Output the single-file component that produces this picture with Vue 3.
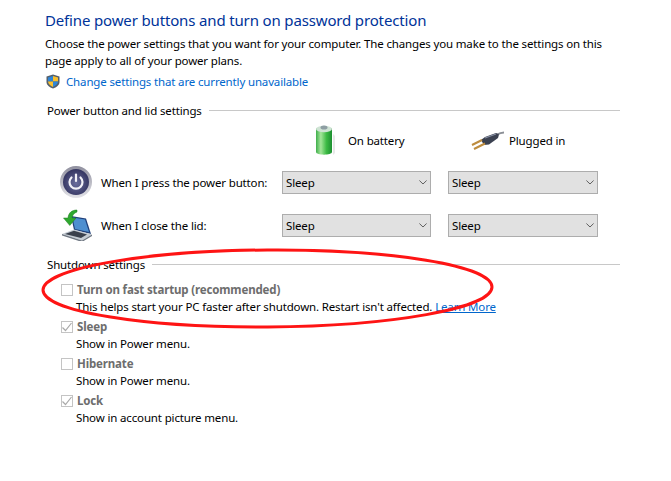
<template>
  <div class="page">
    <h1 class="title">Define power buttons and turn on password protection</h1>
    <p class="intro">Choose the power settings that you want for your computer. The changes you make to the settings on this page apply to all of your power plans.</p>
    <div class="change-row">
      <svg class="shield" width="14" height="15" viewBox="0 0 14 15">
        <path d="M7 .5 13.500 2.500V8C13.500 11 10.500 13.500 7 14.500 3.500 13.500 .5 11 .5 8V2.500Z" fill="#55606b" />
        <path d="M7 2 2 3.400V7.500H7Z" fill="#2f86d8" />
        <path d="M7 2 12 3.400V7.500H7Z" fill="#fbc02d" />
        <path d="M2 7.500C2.200 10 4.500 12 7 13V7.500Z" fill="#fbc02d" />
        <path d="M12 7.500C11.800 10 9.500 12 7 13V7.500Z" fill="#2f86d8" />
      </svg>
      <a class="link">Change settings that are currently unavailable</a>
    </div>

    <div class="section-head first">
      <span>Power button and lid settings</span>
      <i class="rule"></i>
    </div>

    <div class="power-grid">
      <div></div>
      <div></div>
      <div class="col-head battery-head">
        <svg width="20" height="32" viewBox="0 0 20 32">
          <defs>
            <linearGradient id="cell" x1="0" x2="1" y1="0" y2="0">
              <stop offset="0" stop-color="#3fae4b" />
              <stop offset=".3" stop-color="#a4e69a" />
              <stop offset=".65" stop-color="#3dbb45" />
              <stop offset="1" stop-color="#1c8f30" />
            </linearGradient>
          </defs>
          <path d="M1 5C1 2.500 17 2.500 17 5V28C17 31.500 1 31.500 1 28Z" fill="url(#cell)" />
          <ellipse cx="9" cy="5" rx="8" ry="3.200" fill="#cfe3d4" />
          <ellipse cx="9" cy="3.600" rx="3.500" ry="2" fill="#8e9ea3" />
          <path d="M18 10 20 12V29L18 31Z" fill="#e8e8e8" />
        </svg>
        <span>On battery</span>
      </div>
      <div class="col-head plug-head">
        <svg width="33" height="19" viewBox="0 0 33 19">
          <path d="M25 4C28 2.500 30 1.500 33 1.500" fill="none" stroke="#8b8f96" stroke-width="2" />
          <path d="M10 9 14 6 25 2 28 3.500 27 7 18 13.500 13 14Z" fill="#3b4150" />
          <path d="M14 7 25 3" stroke="#8a92a6" stroke-width="1.200" />
          <path d="M1 14 11 9M3 18 14 12.500" stroke="#bd8c3e" stroke-width="2" />
        </svg>
        <span>Plugged in</span>
      </div>

      <div class="row-icon">
        <svg width="32" height="32" viewBox="0 0 32 32">
          <defs>
            <linearGradient id="ring" x1="0" x2="0" y1="0" y2="1">
              <stop offset="0" stop-color="#8f8f9e" />
              <stop offset="1" stop-color="#e3e3e8" />
            </linearGradient>
            <radialGradient id="knob" cx=".5" cy=".55" r=".6">
              <stop offset="0" stop-color="#6a6d9c" />
              <stop offset="1" stop-color="#2e2f5a" />
            </radialGradient>
          </defs>
          <circle cx="16" cy="16" r="16" fill="url(#ring)" />
          <circle cx="16" cy="16" r="13" fill="url(#knob)" />
          <path d="M11.500 11.500A6.500 6.500 0 1 0 20.500 11.500" fill="none" stroke="#f2f2f7" stroke-width="2.200" stroke-linecap="round" />
          <path d="M16 8.500V15" stroke="#f2f2f7" stroke-width="2.200" stroke-linecap="round" />
        </svg>
      </div>
      <div class="row-label">When I press the power button:</div>
      <div v-for="c in 2" :key="'a' + c" class="fake-select">
        <span>Sleep</span>
        <svg width="8" height="5" viewBox="0 0 8 5"><path d="M.4.5 4 4 7.600.5" fill="none" stroke="#606060" /></svg>
      </div>

      <div class="row-icon">
        <svg width="32" height="32" viewBox="0 0 32 32">
          <path d="M11 7 26 9.500 31 25 14 21Z" fill="#1f3f7a" />
          <path d="M12.500 8.500 25 10.500 29 23 15 20Z" fill="#4e8fd0" />
          <path d="M2 25 14 20.500 32 25.500 22 31.500Z" fill="#c4cbd3" />
          <path d="M5 25 14 21.800 27 25.500 21 29Z" fill="#3a404c" />
          <path d="M2 25 22 31.500 32 25.500V27L22 33 2 26.500Z" fill="#6f7782" />
          <path d="M17 1C12 1 8.500 3.500 8 9H3.500L9.800 16.500 16 9H12C12.500 6 14 4 17 3Z" fill="#2fa82f" stroke="#1c7a1e" stroke-width=".5" />
        </svg>
      </div>
      <div class="row-label">When I close the lid:</div>
      <div v-for="c in 2" :key="'b' + c" class="fake-select">
        <span>Sleep</span>
        <svg width="8" height="5" viewBox="0 0 8 5"><path d="M.4.5 4 4 7.600.5" fill="none" stroke="#606060" /></svg>
      </div>
    </div>

    <div class="section-head second">
      <span>Shutdown settings</span>
      <i class="rule"></i>
    </div>

    <div class="options">
      <div v-for="opt in options" :key="opt.label" class="option">
        <div class="option-top">
          <span class="box">
            <svg v-if="opt.checked" width="12" height="12" viewBox="0 0 12 12"><path d="M1.500 6.500 4.500 9.500 10.500 2" fill="none" stroke="#a9a9a9" stroke-width="1.200" /></svg>
          </span>
          <span class="option-label">{{ opt.label }}</span>
        </div>
        <div class="option-desc">{{ opt.desc }}<a v-if="opt.more" class="more">Learn More</a></div>
      </div>
    </div>

    <svg class="ring" width="671" height="481" viewBox="0 0 671 481">
      <ellipse cx="267.500" cy="288.500" rx="224.500" ry="38.500" fill="none" stroke="#fe1414" stroke-width="3" transform="rotate(-.4 267.500 288.500)" />
    </svg>
  </div>
</template>

<script setup>
const options = [
  { label: "Turn on fast startup (recommended)", desc: "This helps start your PC faster after shutdown. Restart isn't affected. ", checked: false, more: true },
  { label: "Sleep", desc: "Show in Power menu.", checked: true },
  { label: "Hibernate", desc: "Show in Power menu.", checked: false },
  { label: "Lock", desc: "Show in account picture menu.", checked: true }
];
</script>

<style>
html, body { margin: 0; background: #fff; }
</style>

<style scoped>
.page {
  position: relative;
  width: 671px;
  height: 481px;
  box-sizing: border-box;
  padding: 10px 51px 0 45px;
  overflow: hidden;
  background: #fff;
  color: #000;
  font-family: "Noto Sans", "Open Sans", sans-serif;
  font-size: 11.5px;
  letter-spacing: -0.15px;
  line-height: 17px;
}

.title {
  margin: 0 0 5px;
  font-size: 15px;
  letter-spacing: -0.15px;
  line-height: 20px;
  font-weight: 400;
  color: #003399;
}

.intro { margin: 0 0 2px; }

.change-row {
  display: flex;
  align-items: center;
  gap: 6px;
  height: 20px;
  margin-left: 1px;
}

.shield { flex: none; }
.link { color: #0066cc; }

.section-head {
  display: flex;
  align-items: center;
  gap: 7px;
  margin-left: 2px;
}
.section-head.first { margin-top: 11px; }
.section-head.second { margin-top: 15px; }

.rule {
  flex: 1;
  height: 1px;
  background: #c8c8c8;
}

.power-grid {
  display: grid;
  grid-template-columns: 32px 190px 149px 167px;
  grid-template-rows: 30px 32px 32px;
  row-gap: 11px;
  margin: 6px 0 0 15px;
  align-items: center;
}
.power-grid > :nth-child(4n) { margin-left: 17px; }

.col-head {
  display: flex;
  align-items: center;
  height: 32px;
}
.battery-head { padding-left: 33px; }
.battery-head span { margin-left: 13px; }
.plug-head { padding-left: 23px; }
.plug-head span { margin-left: 5px; }

.row-icon { height: 32px; }
.row-label { padding-left: 9px; }

.fake-select {
  box-sizing: border-box;
  height: 23px;
  display: flex;
  align-items: center;
  justify-content: space-between;
  padding: 0 3px 0 3px;
  background: #e1e1e1;
  border: 1px solid #adadad;
}

.options {
  display: flex;
  flex-direction: column;
  margin: 8px 0 0 16px;
  gap: 3px;
}

.option-top {
  display: flex;
  align-items: center;
  gap: 4px;
}

.box {
  box-sizing: border-box;
  width: 12px;
  height: 12px;
  display: flex;
  border: 1px solid #c4c4c4;
}
.box svg { margin: -1px; flex: none; }

.option-label {
  font-weight: 700;
  color: #6d6d6d;
}

.option-desc { padding-left: 15px; line-height: 17px; }

.more {
  color: #0066cc;
  text-decoration: underline;
}

.ring {
  position: absolute;
  left: 0;
  top: 0;
  pointer-events: none;
}
</style>
